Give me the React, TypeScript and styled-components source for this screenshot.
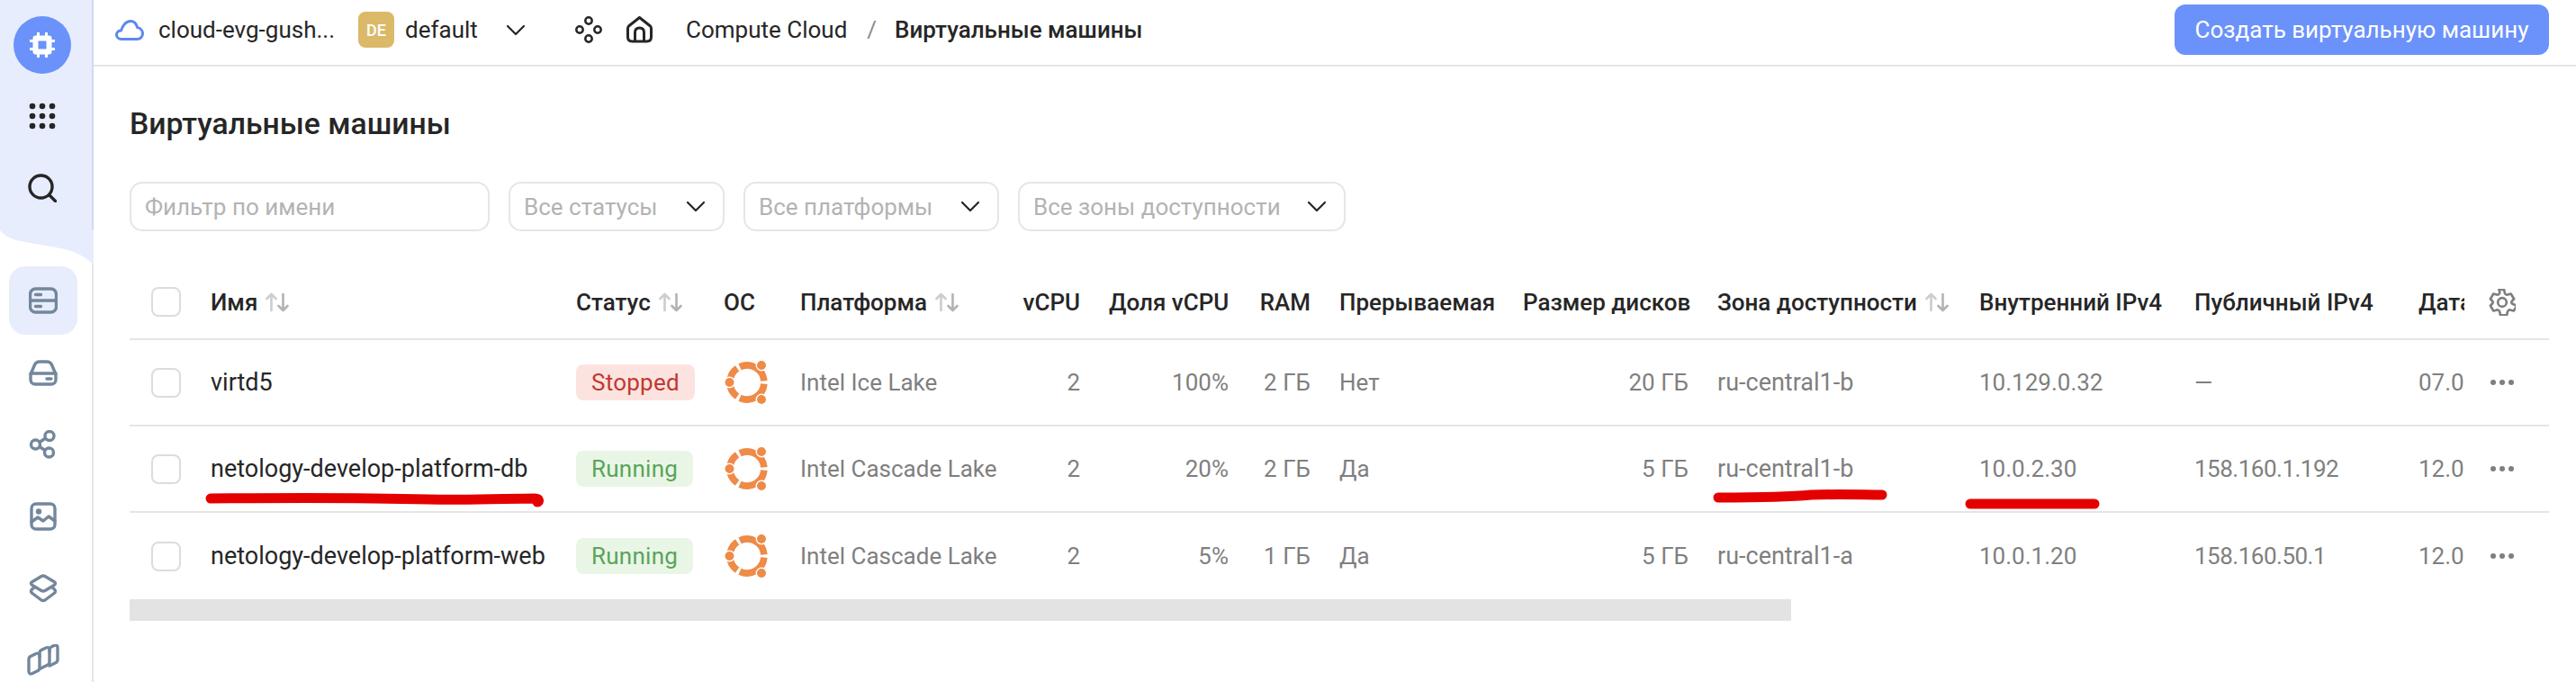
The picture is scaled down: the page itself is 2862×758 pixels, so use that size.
import React from "react";
import styled, { createGlobalStyle } from "styled-components";

const Global = createGlobalStyle`
  html, body { margin: 0; padding: 0; background: #fff; }
  body { font-family: Roboto, "Liberation Sans", sans-serif; color: #262626; overflow: hidden; }
  * { box-sizing: border-box; }
`;

const Page = styled.div`
  position: relative;
  display: flex;
  width: 2862px;
  height: 758px;
  overflow: hidden;
  font-size: 26px;
`;

const Sidebar = styled.aside`
  width: 104px;
  flex: none;
  display: flex;
  flex-direction: column;
  border-right: 2px solid #e5e5e5;
`;

const SideTop = styled.div`
  height: 256px;
  flex: none;
  background: #e8edfd;
  margin-right: -2px;
  border-right: 2px solid #d0daf2;
  display: flex;
  flex-direction: column;
  align-items: center;
  padding: 18px 8px 0 0;
`;

const Wave = styled.svg`
  display: block;
  width: 104px;
  height: 40px;
  flex: none;
  margin-right: -2px;
`;

const LogoCircle = styled.div`
  width: 64px;
  height: 64px;
  border-radius: 50%;
  background: #6a92fa;
  display: flex;
  align-items: center;
  justify-content: center;
`;

const TopIcon = styled.div<{ $mt: number }>`
  margin-top: ${(p) => p.$mt}px;
  height: 32px;
  display: flex;
  align-items: center;
`;

const NavList = styled.nav`
  display: flex;
  flex: none;
  flex-direction: column;
  gap: 4px;
  padding-left: 10px;
`;

const NavItem = styled.div<{ $active?: boolean }>`
  width: 76px;
  height: 76px;
  flex: none;
  border-radius: 18px;
  background: ${(p) => (p.$active ? "#e8edfd" : "transparent")};
  display: flex;
  align-items: center;
  justify-content: center;
  color: #73879c;
`;

const Main = styled.main`
  flex: 1;
  min-width: 0;
  display: flex;
  flex-direction: column;
`;

const Header = styled.header`
  height: 74px;
  flex: none;
  border-bottom: 2px solid #e5e5e5;
  display: flex;
  align-items: center;
  padding: 0 30px 6px 24px;
`;

const CloudName = styled.span`
  margin-left: 16px;
  width: 202px;
  white-space: nowrap;
`;

const Badge = styled.span`
  margin-left: 20px;
  width: 40px;
  height: 40px;
  border-radius: 8px;
  background: #dbb968;
  color: #fff;
  font-size: 18px;
  font-weight: 500;
  display: flex;
  align-items: center;
  justify-content: center;
`;

const FolderName = styled.span`
  margin-left: 12px;
  width: 112px;
`;

const HeaderGap = styled.div<{ $w: number }>`
  width: ${(p) => p.$w}px;
  flex: none;
`;

const Crumb = styled.span`
  white-space: nowrap;
`;

const CrumbSep = styled.span`
  color: #8c8c8c;
  margin: 0 20px 0 22px;
`;

const CrumbCurrent = styled.span`
  font-weight: 500;
  white-space: nowrap;
`;

const PrimaryButton = styled.button`
  margin-left: auto;
  height: 56px;
  width: 416px;
  border: 0;
  border-radius: 12px;
  background: #6b92fa;
  color: #fff;
  font: inherit;
  font-size: 26px;
`;

const Content = styled.div`
  padding: 0 30px 0 40px;
  display: flex;
  flex-direction: column;
`;

const Title = styled.h1`
  margin: 44px 0 0;
  height: 40px;
  line-height: 40px;
  font-size: 33.7px;
  font-weight: 500;
`;

const Filters = styled.div`
  margin-top: 44px;
  display: flex;
  gap: 21px;
`;

const FilterBox = styled.div<{ $w: number }>`
  width: ${(p) => p.$w}px;
  height: 55px;
  border: 2px solid #e6e6e6;
  border-radius: 14px;
  color: #b3b3b3;
  display: flex;
  align-items: center;
  justify-content: space-between;
  padding: 0 19px 0 15px;
  white-space: nowrap;
`;

const Table = styled.div`
  margin-top: 38px;
  display: flex;
  flex-direction: column;
`;

const Row = styled.div<{ $head?: boolean; $last?: boolean }>`
  display: grid;
  grid-template-columns: 58px 374px 132px 53px 214px 65px 133px 59px 172px 184px 259px 207px 217px 51px 30px;
  column-gap: 32px;
  align-items: center;
  height: ${(p) => (p.$head ? 83 : 96)}px;
  border-bottom: ${(p) => (p.$last ? "0" : "2px solid #e5e5e5")};
  ${(p) => (p.$head ? "font-weight: 500;" : "color: #7f7f7f;")}
`;

const Check = styled.span`
  width: 33px;
  height: 33px;
  margin-left: 24px;
  border: 2px solid #dcdcdc;
  border-radius: 8px;
  background: #fff;
`;

const Cell = styled.div<{ $right?: boolean; $dark?: boolean; $size?: number; $track?: number }>`
  white-space: nowrap;
  text-align: ${(p) => (p.$right ? "right" : "left")};
  ${(p) => (p.$dark ? "color: #262626;" : "")}
  ${(p) => (p.$size ? `font-size: ${p.$size}px;` : "")}
  ${(p) => (p.$track ? `letter-spacing: ${p.$track}px;` : "")}
`;

const DateCell = styled.div`
  white-space: nowrap;
  overflow: hidden;
`;

const Action = styled.div`
  display: flex;
  justify-content: center;
  margin-left: -5px;
  width: 30px;
`;

const Sortable = styled.div`
  display: flex;
  align-items: center;
  gap: 9px;
  white-space: nowrap;
`;

const Status = styled.span<{ $ok?: boolean }>`
  display: inline-flex;
  align-items: center;
  height: 40px;
  padding: 0 17px;
  border-radius: 8px;
  letter-spacing: 0.25px;
  background: ${(p) => (p.$ok ? "#e9f6e6" : "#fde3e0")};
  color: ${(p) => (p.$ok ? "#5aa45a" : "#c0392f")};
`;

const Scrollbar = styled.div`
  width: 1846px;
  height: 24px;
  background: #e3e3e3;
`;

const Mark = styled.svg<{ $x: number; $y: number }>`
  position: absolute;
  left: ${(p) => p.$x}px;
  top: ${(p) => p.$y}px;
  fill: none;
  stroke: #e50000;
  stroke-width: 11;
  stroke-linecap: round;
  stroke-linejoin: round;
`;

const stroke = { fill: "none", stroke: "currentColor", strokeWidth: 3.4, strokeLinecap: "round", strokeLinejoin: "round" } as const;

const Chevron = () => (
  <svg width="22" height="13" viewBox="0 0 22 13" fill="none" stroke="#262626" strokeWidth="2.2" strokeLinecap="round" strokeLinejoin="round">
    <path d="M2 2l9 9 9-9" />
  </svg>
);

const SortIcon = () => (
  <svg width="26" height="22" viewBox="0 0 26 22" fill="none" strokeWidth="2.6" strokeLinecap="round" strokeLinejoin="round">
    <path d="M6.500 20V2M1.500 7l5-5 5 5" stroke="#cdcdcd" />
    <path d="M19.500 2v18M14.500 15l5 5 5-5" stroke="#b3b3b3" />
  </svg>
);

const Ubuntu = () => (
  <svg width="52" height="52" viewBox="-26 -26 52 52">
    <g fill="none" stroke="#ef8a47" strokeWidth="7.6">
      <path d="M-8 -17.200A19 19 0 0 1 18.900 -1.700" />
      <path d="M18.900 1.700A19 19 0 0 1 -8 17.200" />
      <path d="M-10.900 15.600A19 19 0 0 1 -10.900 -15.600" />
    </g>
    <g fill="#ef8a47" stroke="#fff" strokeWidth="1.400">
      <circle cx="-19.500" cy="0" r="5.700" />
      <circle cx="16" cy="-19" r="5.700" />
      <circle cx="16" cy="19" r="5.700" />
    </g>
  </svg>
);

const Dots = () => (
  <svg width="28" height="8" viewBox="0 0 28 8" fill="#7f7f7f">
    <circle cx="4" cy="4" r="3" />
    <circle cx="14" cy="4" r="3" />
    <circle cx="24" cy="4" r="3" />
  </svg>
);

const Gear = () => (
  <svg width="30" height="30" viewBox="3 2.400 18 19.200" fill="none" stroke="#7f7f7f" strokeWidth="1.700" strokeLinecap="round" strokeLinejoin="round">
    <path d="M9.700 2.900 10.300 4.800a1.800 1.800 0 0 1-.8 1.500 1.900 1.900 0 0 1-1.800.1L5.800 5.900 3.600 9.600 5 11a1.700 1.700 0 0 1 0 2L3.600 14.400l2.200 3.700 1.900-.5a1.900 1.900 0 0 1 1.800.1 1.800 1.800 0 0 1 .8 1.500l.4 1.900h4.600l.4-1.900a1.800 1.800 0 0 1 .8-1.500 1.900 1.900 0 0 1 1.800-.1l1.900.5 2.200-3.700L19 13a1.700 1.700 0 0 1 0-2l1.400-1.400-2.200-3.700-1.900.5a1.900 1.900 0 0 1-1.800-.1 1.800 1.800 0 0 1-.8-1.500l-.4-1.900Z" />
    <circle cx="12" cy="12" r="3.100" />
  </svg>
);

const navIcons = [
  <svg key="server" width="32" height="32" viewBox="0 0 32 32">
    <rect x="1.500" y="3" width="29" height="26" rx="6" {...stroke} />
    <path d="M1.500 16h29M7.500 9.500h6M7.500 22.500h6" {...stroke} />
  </svg>,
  <svg key="disk" width="32" height="32" viewBox="0 0 32 32">
    <path d="M2 18 6.500 7.500Q8 4 12 4h8q4 0 5.500 3.500L30 18v6a5 5 0 0 1-5 5H7a5 5 0 0 1-5-5Z" {...stroke} />
    <path d="M2 17h28M20 23h5" {...stroke} />
  </svg>,
  <svg key="net" width="32" height="32" viewBox="0 0 32 32">
    <circle cx="7.500" cy="16" r="5" {...stroke} />
    <circle cx="23" cy="6.500" r="5" {...stroke} />
    <circle cx="22.500" cy="25" r="5" {...stroke} />
    <path d="M12 13.500l6.500-4.500M12 18.500l6 4" {...stroke} />
  </svg>,
  <svg key="image" width="32" height="32" viewBox="0 0 32 32">
    <rect x="3" y="2" width="26" height="28" rx="5" {...stroke} />
    <circle cx="11" cy="10.500" r="3.200" fill="currentColor" />
    <path d="M3 22l7-5 6 4 6-5 7 5" {...stroke} />
  </svg>,
  <svg key="layers" width="32" height="32" viewBox="0 0 32 32">
    <path d="M14 2.500a4 4 0 0 1 4 0l10 6q3 2 0 4l-10 6a4 4 0 0 1-4 0l-10-6q-3-2 0-4Z" {...stroke} />
    <path d="M6 15l-2 1.500q-3 3 0 5l10 7.500a4 4 0 0 0 4 0l10-7.500q3-2 0-5L26 15" {...stroke} />
  </svg>,
  <svg key="cards" width="36" height="36" viewBox="0 0 36 36">
    <path d="M2 17q0-2.500 2-3.500l6-3q4-1.500 4 2.500v13q0 2.500-2 3.500l-6 3q-4 1.500-4-2.500Z" {...stroke} />
    <path d="M14 14V10q0-2.500 2-3.500l5-2.500q4-1.500 4 2.500v13q0 2.500-2 3.500l-9 4.500" {...stroke} />
    <path d="M25 8V6q0-2 2-3l3-1.500q4-1.500 4 2.500v13q0 2.500-2 3.500l-7 3.500" {...stroke} />
  </svg>,
];

type Vm = { name: string; ok: boolean; platform: string; share: string; ram: string; pre: string; disk: string; zone: string; ip: string; pub: string; date: string };

const vms: Vm[] = [
  { name: "virtd5", ok: false, platform: "Intel Ice Lake", share: "100%", ram: "2 ГБ", pre: "Нет", disk: "20 ГБ", zone: "ru-central1-b", ip: "10.129.0.32", pub: "—", date: "07.02.2025" },
  { name: "netology-develop-platform-db", ok: true, platform: "Intel Cascade Lake", share: "20%", ram: "2 ГБ", pre: "Да", disk: "5 ГБ", zone: "ru-central1-b", ip: "10.0.2.30", pub: "158.160.1.192", date: "12.02.2025" },
  { name: "netology-develop-platform-web", ok: true, platform: "Intel Cascade Lake", share: "5%", ram: "1 ГБ", pre: "Да", disk: "5 ГБ", zone: "ru-central1-a", ip: "10.0.1.20", pub: "158.160.50.1", date: "12.02.2025" },
];

export default function App() {
  return (
    <Page>
      <Global />
      <Sidebar>
        <SideTop>
          <LogoCircle>
            <svg width="28" height="28" viewBox="0 0 28 28" fill="#fff">
              <path d="M6.500 3.500a3 3 0 0 0-3 3v15a3 3 0 0 0 3 3h15a3 3 0 0 0 3-3v-15a3 3 0 0 0-3-3ZM9.500 9.500h9v9h-9Z" fillRule="evenodd" />
              <path d="M8 0h3v4H8ZM17 0h3v4h-3ZM8 24h3v4H8ZM17 24h3v4h-3ZM0 8h4v3H0ZM0 17h4v3H0ZM24 8h4v3h-4ZM24 17h4v3h-4Z" />
            </svg>
          </LogoCircle>
          <TopIcon $mt={31}>
            <svg width="32" height="32" viewBox="0 0 32 32" fill="#262626">
              {[5, 16, 27].flatMap((y) => [5, 16, 27].map((x) => <circle key={`${x}-${y}`} cx={x} cy={y} r="3.300" />))}
            </svg>
          </TopIcon>
          <TopIcon $mt={48}>
            <svg width="32" height="32" viewBox="0 0 32 32" fill="none" stroke="#262626" strokeWidth="3.400" strokeLinecap="round">
              <circle cx="14.500" cy="14.500" r="12.500" />
              <path d="M24 24l6.500 6.500" />
            </svg>
          </TopIcon>
        </SideTop>
        <Wave viewBox="0 0 104 40">
          <path d="M0 0H104V38C85 20 65 20 45 16C25 12 10 12 0 0Z" fill="#e8edfd" />
        </Wave>
        <NavList>
          {navIcons.map((icon, i) => (
            <NavItem key={i} $active={i === 0}>
              {icon}
            </NavItem>
          ))}
        </NavList>
      </Sidebar>
      <Main>
        <Header>
          <svg width="32" height="23" viewBox="0 0 32 23" fill="none" stroke="#5f87ee" strokeWidth="3" strokeLinejoin="round">
            <path d="M7 21.500C3.500 21.500 1.500 19 1.500 16.500C1.500 13.500 4 12 6.500 12C8 6.500 12 1.500 17 1.500C21 1.500 23.500 4.500 24.500 8.500C28 9 30.500 12 30.500 15.500C30.500 19 27.500 21.500 24.500 21.500Z" />
          </svg>
          <CloudName>cloud-evg-gush...</CloudName>
          <Badge>DE</Badge>
          <FolderName>default</FolderName>
          <Chevron />
          <HeaderGap $w={55} />
          <svg width="30" height="30" viewBox="0 0 30 30" fill="none" stroke="#262626" strokeWidth="2.500">
            <circle cx="15" cy="5" r="3.700" />
            <circle cx="5" cy="15" r="3.700" />
            <circle cx="25" cy="15" r="3.700" />
            <circle cx="15" cy="25" r="3.700" />
          </svg>
          <HeaderGap $w={27} />
          <svg width="29" height="30" viewBox="0 0 29 30" fill="none" stroke="#262626" strokeWidth="3" strokeLinejoin="round">
            <path d="M14.500 1.500L26.500 11Q27.500 12 27.500 14V23Q27.500 28 22.500 28H6.500Q1.500 28 1.500 23V14Q1.500 12 2.500 11Z" />
            <path d="M9.500 28V18Q9.500 13 14.500 13Q19.500 13 19.500 18V28" />
          </svg>
          <HeaderGap $w={37} />
          <Crumb>Compute Cloud</Crumb>
          <CrumbSep>/</CrumbSep>
          <CrumbCurrent>Виртуальные машины</CrumbCurrent>
          <PrimaryButton>Создать виртуальную машину</PrimaryButton>
        </Header>
        <Content>
          <Title>Виртуальные машины</Title>
          <Filters>
            <FilterBox $w={400}>Фильтр по имени</FilterBox>
            <FilterBox $w={240}>
              Все статусы
              <Chevron />
            </FilterBox>
            <FilterBox $w={284}>
              Все платформы
              <Chevron />
            </FilterBox>
            <FilterBox $w={364}>
              Все зоны доступности
              <Chevron />
            </FilterBox>
          </Filters>
          <Table>
            <Row $head>
              <Check />
              <Sortable>
                Имя
                <SortIcon />
              </Sortable>
              <Sortable>
                Статус
                <SortIcon />
              </Sortable>
              <Cell>ОС</Cell>
              <Sortable>
                Платформа
                <SortIcon />
              </Sortable>
              <Cell $right>vCPU</Cell>
              <Cell $right>Доля vCPU</Cell>
              <Cell $right>RAM</Cell>
              <Cell>Прерываемая</Cell>
              <Cell $right>Размер дисков</Cell>
              <Sortable>
                Зона доступности
                <SortIcon />
              </Sortable>
              <Cell>Внутренний IPv4</Cell>
              <Cell>Публичный IPv4</Cell>
              <DateCell>Дата создания</DateCell>
              <Action>
                <Gear />
              </Action>
            </Row>
            {vms.map((vm, i) => (
              <Row key={vm.name} $last={i === vms.length - 1}>
                <Check />
                <Cell $dark $size={27}>
                  {vm.name}
                </Cell>
                <Cell>
                  <Status $ok={vm.ok}>{vm.ok ? "Running" : "Stopped"}</Status>
                </Cell>
                <Ubuntu />
                <Cell>{vm.platform}</Cell>
                <Cell $right>2</Cell>
                <Cell $right>{vm.share}</Cell>
                <Cell $right>{vm.ram}</Cell>
                <Cell>{vm.pre}</Cell>
                <Cell $right>{vm.disk}</Cell>
                <Cell $size={27}>{vm.zone}</Cell>
                <Cell>{vm.ip}</Cell>
                <Cell $track={-0.5}>{vm.pub}</Cell>
                <DateCell>{vm.date}</DateCell>
                <Action>
                  <Dots />
                </Action>
              </Row>
            ))}
          </Table>
          <Scrollbar />
        </Content>
      </Main>
      <Mark $x={226} $y={546} width="382" height="20" viewBox="0 0 382 20">
        <path d="M8 8C100 7 180 7 250 9C300 10 340 8 368 8C374 8 373 12 371 12" />
      </Mark>
      <Mark $x={1902} $y={542} width="196" height="20" viewBox="0 0 196 20">
        <path d="M7 11C50 11 80 11 110 8C140 7 170 8 189 8" />
      </Mark>
      <Mark $x={2182} $y={550} width="152" height="20" viewBox="0 0 152 20">
        <path d="M7 10H145" />
      </Mark>
    </Page>
  );
}
